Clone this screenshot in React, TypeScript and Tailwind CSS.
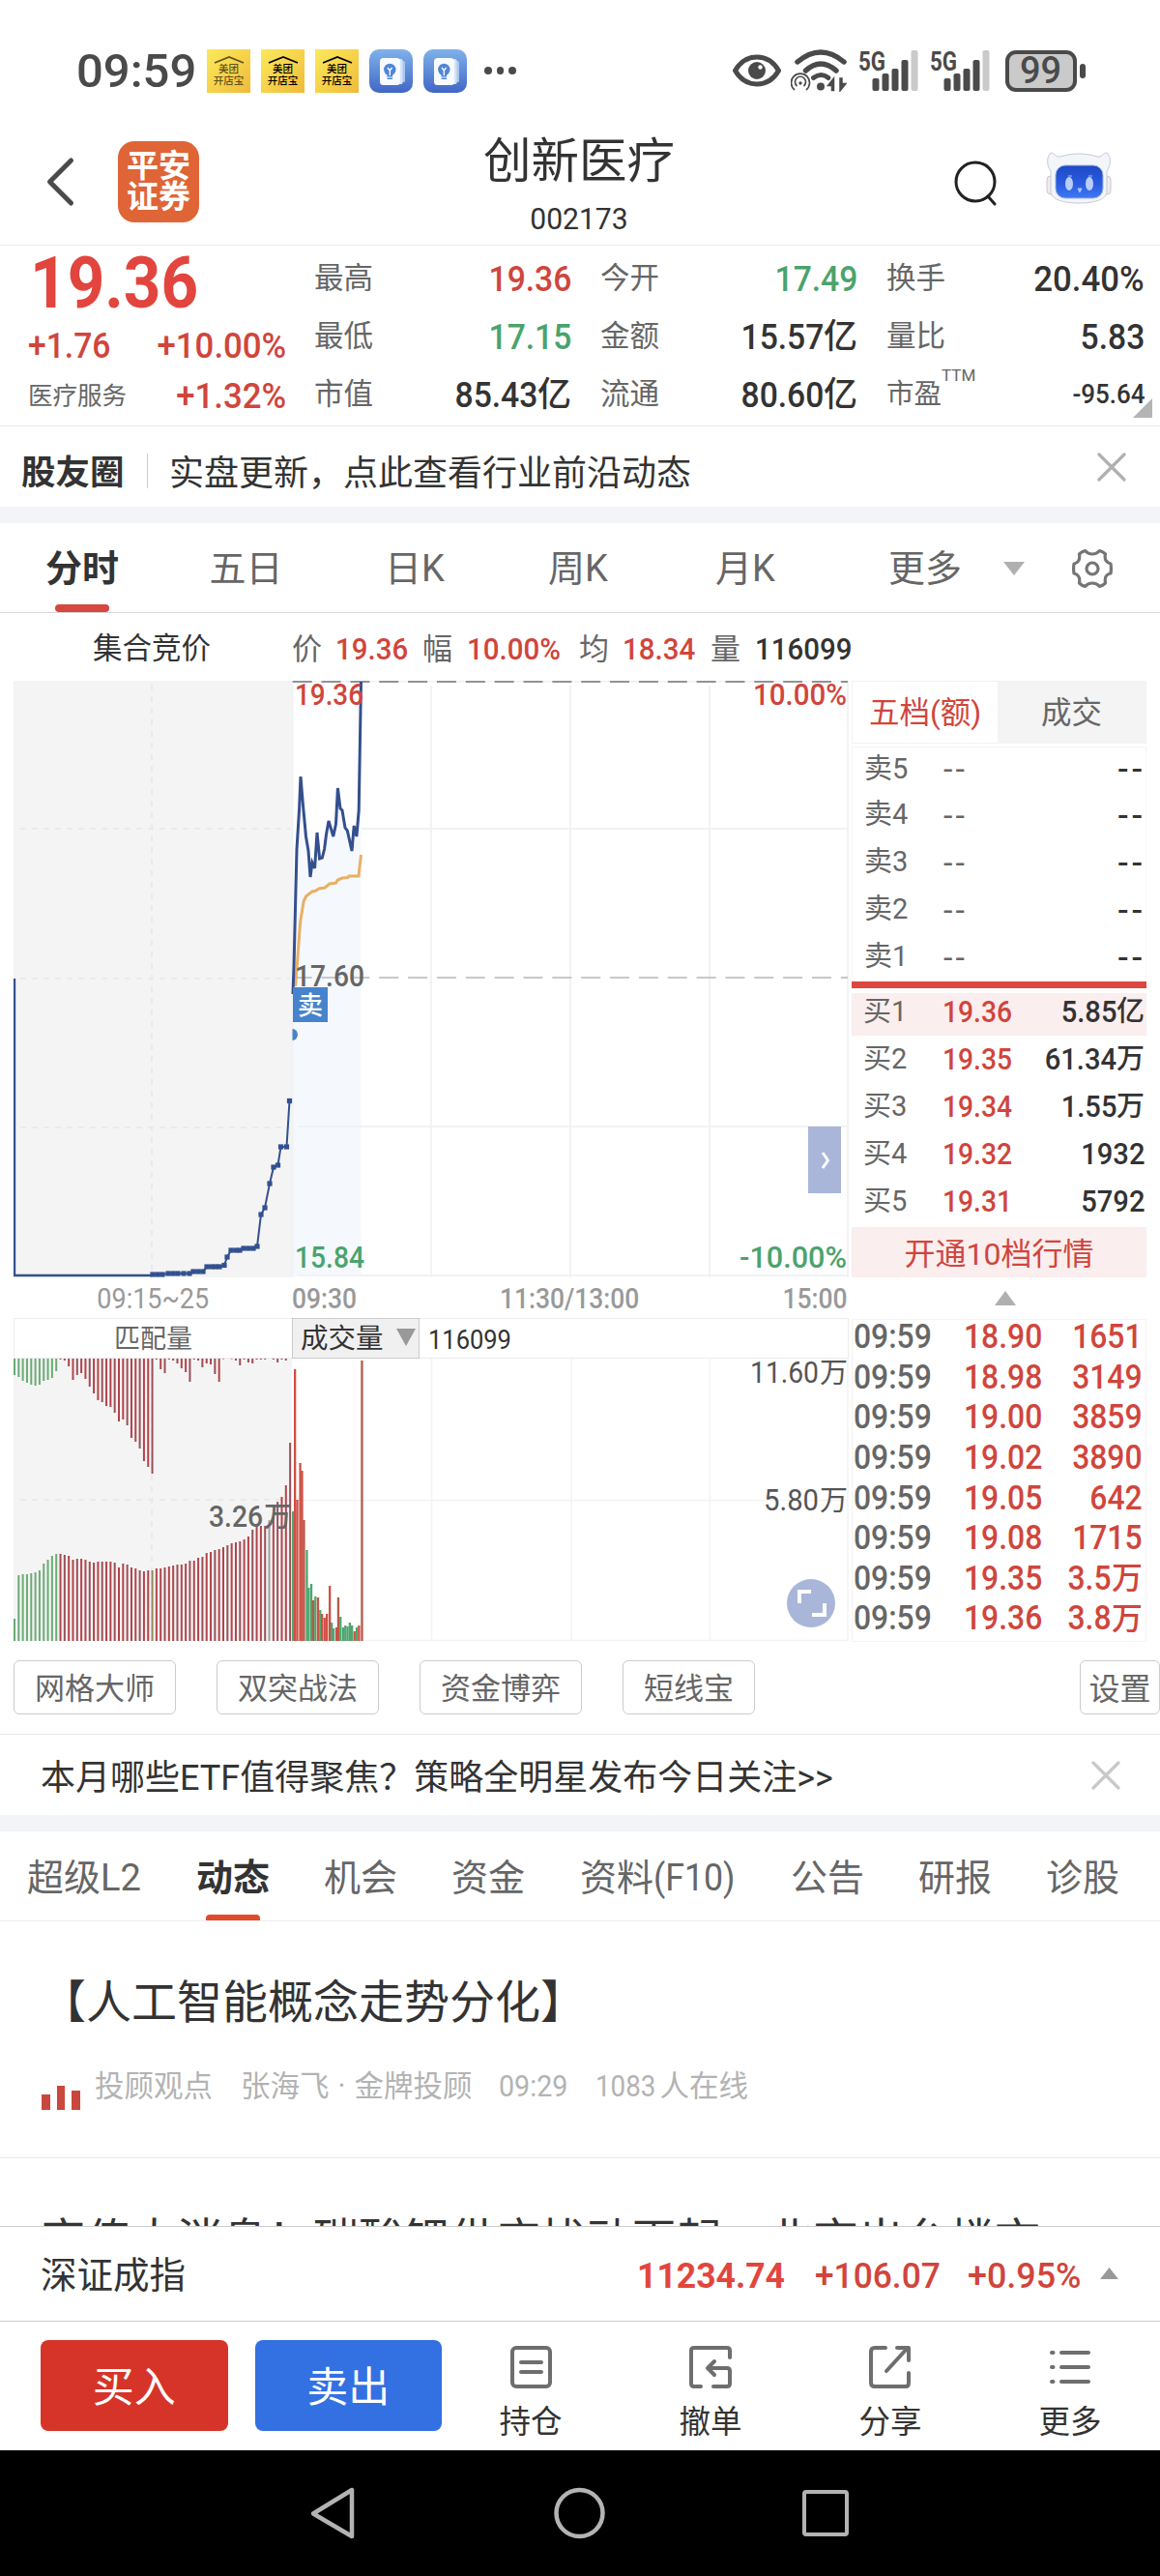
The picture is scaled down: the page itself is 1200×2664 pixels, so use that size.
import type { ReactNode } from "react";

const RED = "text-[#d0453c]";
const GREEN = "text-[#4aa36c]";

/* Condensed figures, anchored to the side they are aligned on. */
function Num({ children, className = "", right = false, wide = false }: { children: ReactNode; className?: string; right?: boolean; wide?: boolean }) {
  return (
    <span
      className={`inline-block whitespace-nowrap ${wide ? "scale-x-[0.94]" : "scale-x-[0.91]"} ${right ? "origin-right" : "origin-left"} ${className}`}
    >
      {children}
    </span>
  );
}

function MeituanIcon({ faded = false }: { faded?: boolean }) {
  return (
    <div
      className={`flex h-[45px] w-[45px] flex-col items-center bg-linear-to-br from-[#fae95c] via-[#f6d34a] to-[#f0b93c] pt-[7px] text-[10.5px] leading-[12px] font-medium ${faded ? "text-[#5f5320]" : "text-black"}`}
    >
      <svg width="32" height="8" viewBox="0 0 32 8" fill="none" stroke="currentColor" strokeWidth="1.8">
        <path d="M1 7 16 1l15 6" />
      </svg>
      <span>美团</span>
      <span>开店宝</span>
    </div>
  );
}

function IdeaIcon() {
  return (
    <svg width="45" height="45" viewBox="0 0 45 45">
      <defs>
        <linearGradient id="idea" x1="0" y1="0" x2="0" y2="1">
          <stop offset="0" stopColor="#7fb2ea" />
          <stop offset="1" stopColor="#4166c6" />
        </linearGradient>
      </defs>
      <rect width="45" height="45" rx="10" fill="url(#idea)" />
      <rect x="33" y="12" width="4" height="22" rx="1.5" fill="#a9c6f0" />
      <rect x="30" y="10" width="4.500" height="26" rx="1.5" fill="#d5e3f8" />
      <rect x="11" y="9" width="21" height="28" rx="3.5" fill="#f7faff" />
      <circle cx="21.300" cy="21" r="6.200" fill="#4f86d8" />
      <path d="M18.500 25h5.600v3.500h-5.600zM18.500 29.500h5.600v1.500h-5.600z" fill="#4f86d8" />
      <path d="m19 19 2.300 3 2.300-3M21.300 22v5" stroke="#fff" strokeWidth="1.3" fill="none" />
    </svg>
  );
}

function Signal() {
  return (
    <svg width="62" height="44" viewBox="0 0 62 44">
      <text x="0" y="22" fontSize="28" fontWeight="700" fill="#4a4a4a" textLength="28" lengthAdjust="spacingAndGlyphs" fontFamily="Roboto, sans-serif">
        5G
      </text>
      <rect x="14.500" y="30" width="7" height="13" rx="2" fill="#4a4a4a" />
      <rect x="24.500" y="25" width="7" height="18" rx="2" fill="#4a4a4a" />
      <rect x="34.500" y="20" width="7" height="23" rx="2" fill="#4a4a4a" />
      <rect x="44.500" y="11" width="7" height="32" rx="2" fill="#4a4a4a" />
      <rect x="54.500" y="1" width="7" height="42" rx="2" fill="#cacaca" />
    </svg>
  );
}

function StatusBar() {
  return (
    <div className="flex h-[138px] items-center pt-[8px] text-[#4a4a4a]">
      <div className="ml-[79px] w-[135px] text-[49px] leading-none font-medium">09:59</div>
      <div className="flex gap-[11px]">
        <MeituanIcon faded />
        <MeituanIcon />
        <MeituanIcon />
        <IdeaIcon />
        <IdeaIcon />
      </div>
      <div className="ml-[18px] flex gap-[5px]">
        <i className="h-[7.500px] w-[7.500px] rounded-full bg-[#4a4a4a]" />
        <i className="h-[7.500px] w-[7.500px] rounded-full bg-[#4a4a4a]" />
        <i className="h-[7.500px] w-[7.500px] rounded-full bg-[#4a4a4a]" />
      </div>
      <svg className="ml-[224px]" width="50" height="34" viewBox="0 0 50 34">
        <path d="M2.500 17C8 7.500 16 3 25 3s17 4.500 22.500 14C42 26.500 34 31 25 31S8 26.500 2.500 17Z" fill="none" stroke="#4a4a4a" strokeWidth="5" strokeLinejoin="round" />
        <circle cx="25" cy="17" r="9" fill="#4a4a4a" />
        <circle cx="28.500" cy="13.500" r="2.200" fill="#fff" />
      </svg>
      <svg className="ml-[10px]" width="58" height="44" viewBox="0 0 58 44" fill="none" stroke="#4a4a4a">
        <path d="M7 13Q31-7 55 13" strokeWidth="5.500" strokeLinecap="round" />
        <path d="M15.500 22Q31 8 47 22" strokeWidth="5.500" strokeLinecap="round" />
        <path d="M23.500 29.500q8-6 15.500 0" strokeWidth="5" strokeLinecap="round" />
        <circle cx="31" cy="38.500" r="4" fill="#4a4a4a" stroke="none" />
        <path d="M38.500 37.500 44.500 30v12.500h-2v-5zM57 35.500 51 43V30h2v5.500z" fill="#4a4a4a" strokeWidth="1.500" />
        <path d="M4 42A9.500 9.500 0 1 1 16 42M6.500 38a5.500 5.500 0 1 1 7 0" strokeWidth="1.700" />
        <circle cx="10" cy="35" r="1.700" fill="#4a4a4a" stroke="none" />
      </svg>
      <div className="ml-[12px] flex gap-[12px]">
        <Signal />
        <Signal />
      </div>
      <div className="ml-[16px] flex h-[43px] w-[74px] items-center justify-center rounded-[11px] border-[4px] border-[#4a4a4a] bg-[#cacaca] text-[38px] leading-none font-medium">
        99
      </div>
      <div className="ml-[3px] h-[15px] w-[6px] rounded-[3px] bg-[#4a4a4a]" />
    </div>
  );
}

function Robot() {
  return (
    <svg width="70" height="54" viewBox="0 0 70 54">
      <defs>
        <linearGradient id="visor" x1="0" y1="0" x2="0" y2="1">
          <stop offset="0" stopColor="#1f49c4" />
          <stop offset=".55" stopColor="#2a5be0" />
          <stop offset="1" stopColor="#3f78f2" />
        </linearGradient>
      </defs>
      <rect x="2" y="25" width="10" height="19" rx="4" fill="#f3eaea" stroke="#c8c8d2" />
      <rect x="58" y="25" width="10" height="19" rx="4" fill="#f3eaea" stroke="#c8c8d2" />
      <path
        d="M6 1c4 0 5 5 10 4 12-4 26-4 38 0 5 1 6-4 10-4 5 6 4 13 0 19v21c0 8-12 12-29 12S6 49 6 41V20C2 14 1 7 6 1Z"
        fill="#f3f5f9"
        stroke="#c5cad6"
      />
      <rect x="11" y="14" width="49" height="34" rx="10" fill="url(#visor)" stroke="#9fb4e8" />
      <ellipse cx="25" cy="33" rx="4" ry="7" fill="#b9cffa" />
      <ellipse cx="46" cy="33" rx="4" ry="7" fill="#b9cffa" />
      <path d="M34 38h4l-2 4zM24 25h4M45 25h4" stroke="#a9c2f7" fill="#a9c2f7" />
    </svg>
  );
}

function Header() {
  return (
    <div className="flex h-[116px] items-start border-b border-[#ececec]">
      <div className="flex h-[99px] w-[400px] items-center pl-[47px]">
        <svg width="32" height="52" viewBox="0 0 32 52" fill="none" stroke="#4a4a4a" strokeWidth="5" strokeLinecap="round" strokeLinejoin="round">
          <path d="M26.500 4 4.500 26l22 22" />
        </svg>
        <div className="ml-[43px] flex h-[84px] w-[84px] flex-col items-center justify-center rounded-[17px] bg-[#df6537] pt-[1px] text-[33px] leading-[32px] font-bold text-white">
          <span>平安</span>
          <span>证券</span>
        </div>
      </div>
      <div className="flex w-[400px] flex-col items-center pr-[2px] text-[#333]">
        <div className="text-[49.500px] leading-[58px]">创新医疗</div>
        <div className="-mt-px scale-x-[0.94] text-[32px] leading-[62px]">002173</div>
      </div>
      <div className="flex h-[99px] w-[400px] items-center">
        <svg className="ml-[186px]" width="48" height="50" viewBox="0 0 48 50" fill="none" stroke="#222" strokeWidth="3" strokeLinecap="round">
          <circle cx="23" cy="25" r="20" />
          <path d="m36 40 7 8" />
        </svg>
        <div className="ml-[47px] -mt-[8px]">
          <Robot />
        </div>
      </div>
    </div>
  );
}

function Stat({ label, value, unit, color = "text-[#333]", wide = false }: { label: string; value: string; unit?: string; color?: string; wide?: boolean }) {
  return (
    <div className="flex h-[60px] items-center justify-between">
      <span className="pt-px text-[30.500px] text-[#666]">{label}</span>
      <span className={`flex items-center font-medium ${color}`}>
        <Num right wide={wide} className="text-[37px]">{value}</Num>
        {unit && <span className="text-[35px]">{unit}</span>}
      </span>
    </div>
  );
}

function Quote() {
  return (
    <div className="relative flex h-[187px] border-b border-[#e6e6e6] leading-none">
      <div className="w-[325px] pl-[29px]">
        <div className="flex h-[77px] items-center pl-[2px] text-[#e2453d]">
          <Num className="text-[74px] font-bold">19.36</Num>
        </div>
        <div className={`flex h-[53px] w-[267px] items-center justify-between text-[37px] font-medium ${RED}`}>
          <Num>+1.76</Num>
          <Num right wide>+10.00%</Num>
        </div>
        <div className={`flex h-[50px] w-[267px] items-center justify-between ${RED}`}>
          <span className="pt-px text-[25.500px] text-[#666]">医疗服务</span>
          <Num right wide className="text-[37px] font-medium">+1.32%</Num>
        </div>
      </div>
      <div className="flex gap-[30px] pt-[4px]">
        <div className="w-[266px]">
          <Stat label="最高" value="19.36" color={RED} />
          <Stat label="最低" value="17.15" color={GREEN} />
          <Stat label="市值" value="85.43" unit="亿" />
        </div>
        <div className="w-[266px]">
          <Stat label="今开" value="17.49" color={GREEN} />
          <Stat label="金额" value="15.57" unit="亿" />
          <Stat label="流通" value="80.60" unit="亿" />
        </div>
        <div className="w-[267px]">
          <Stat label="换手" value="20.40%" wide />
          <Stat label="量比" value="5.83" />
          <div className="flex h-[60px] items-center justify-between">
            <span className="flex items-center pt-px text-[28.500px] text-[#666]">
              市盈<sup className="-mt-[24px] text-[17px] leading-none">TTM</sup>
            </span>
            <Num right className="text-[28.500px] font-medium text-[#333]">-95.64</Num>
          </div>
        </div>
      </div>
      <svg className="absolute right-[8px] bottom-[8px]" width="20" height="20" viewBox="0 0 20 20">
        <path d="M20 0v20H0z" fill="#b4b4b4" />
      </svg>
    </div>
  );
}

function Cross({ color }: { color: string }) {
  return (
    <svg width="30" height="30" viewBox="0 0 30 30" stroke={color} strokeWidth="3.200" strokeLinecap="round">
      <path d="m2 2 26 26M28 2 2 28" />
    </svg>
  );
}

function Notice() {
  return (
    <div className="flex h-[83px] items-center leading-none text-[#333]">
      <div className="mt-[14px] ml-[22px] w-[130px] text-[35.500px] font-bold">股友圈</div>
      <div className="mt-[9px] h-[36px] w-px bg-[#ccc]" />
      <div className="mt-[14px] ml-[22px] flex-1 text-[36px]">实盘更新，点此查看行业前沿动态</div>
      <div className="mr-[35px]">
        <Cross color="#b0b0b0" />
      </div>
    </div>
  );
}

function PeriodTabs() {
  const tab = "flex items-center justify-center";
  return (
    <div className="flex h-[93px] border-b border-[#d8d8d8] pt-[2px] text-[38px] leading-none text-[#666]">
      <div className={`${tab} relative w-[170px] font-bold text-[#333]`}>
        分时
        <span className="absolute bottom-0 left-[57px] h-[8px] w-[56px] rounded-[4px] bg-[#d4483f]" />
      </div>
      <div className={`${tab} w-[169px]`}>五日</div>
      <div className={`${tab} w-[180px]`}>日K</div>
      <div className={`${tab} w-[158px]`}>周K</div>
      <div className={`${tab} w-[188px]`}>月K</div>
      <div className={`${tab} ml-[11px] w-[162px]`}>更多</div>
      <div className={`${tab} w-[22px]`}>
        <svg width="22" height="14" viewBox="0 0 22 14"><path d="M0 0h22L11 14z" fill="#b0b0b0" /></svg>
      </div>
      <div className={`${tab} ml-[49px] w-[42px]`}>
        <svg width="42" height="42" viewBox="0 0 42 42" fill="none" stroke="#757575" strokeWidth="3.200" strokeLinejoin="round">
          <path d="M13.500 2.500Q16.500 6 21 6t7.500-3.500Q32 3.500 34.500 6q-1 4.500 .8 7t4.700 3q.8 5 0 10-3.500 .7-4.900 3t-.6 7q-2.500 2.500-6 3.500Q25.500 36 21 36t-7.500 3.500Q10 38.500 7.500 36q.8-4.500-.8-7T2 26q-.8-5 0-10 3.200-.5 4.700-3t.8-7Q10 3.500 13.500 2.500Z" />
          <circle cx="21" cy="21" r="6" />
        </svg>
      </div>
    </div>
  );
}

function ChartHeader() {
  const val = "inline-block origin-left scale-x-[0.95] font-medium";
  return (
    <div className="flex h-[70px] items-center pt-[5px] text-[31px] leading-none text-[#666]">
      <span className="w-[302px] pl-[96px] text-[30.500px] text-[#333]">集合竞价</span>
      <span className="w-[45px]">价</span>
      <span className="w-[90px]"><span className={`${val} ${RED}`}>19.36</span></span>
      <span className="w-[46px]">幅</span>
      <span className="w-[116px]"><span className={`${val} ${RED}`}>10.00%</span></span>
      <span className="w-[45px]">均</span>
      <span className="w-[91px]"><span className={`${val} ${RED}`}>18.34</span></span>
      <span className="w-[46px]">量</span>
      <span className={`${val} text-[#333]`}>116099</span>
    </div>
  );
}

const PRICE =
  "303,1028 304,1000 307,878 309.5,838 311,803 313.5,833 316.5,865 319,880 321,907 323,892 325.600,898 328,861 330.600,888 333.300,887 335.600,878 337.500,863 340,849 344.800,865 347.500,852 349.400,815 352,836 354,838 357,856 359.300,859 364,880 366.200,854 368.900,865 371.200,838 373.500,705";
const AVERAGE =
  "305.700,1020 308.400,983 310.700,953 314.200,932 316.500,927 319,925 323,922 326,921.500 330,919 336,918 341,914 347.500,913 349.400,910 354,908 359.700,907.500 361,906 371,906 373.500,884";
const AUCTION: [number, number][] = [
  [158, 1318], [163, 1318], [168, 1318], [174, 1317], [179, 1317], [184, 1317], [190, 1317], [196, 1317],
  [200, 1315], [205, 1315], [210, 1315], [214, 1310], [219, 1310], [223, 1310], [227, 1310], [232, 1308.500],
  [235, 1300], [239, 1293], [244, 1293], [248, 1293], [252, 1291], [257, 1291], [262, 1291], [266, 1289],
  [270, 1256], [274, 1249], [279, 1224], [283, 1207], [287.500, 1205], [290.500, 1186], [296.500, 1186], [299.500, 1138.500],
];

function Label({ x, y, w, fill, children, weight = 500, size = 32 }: { x: number; y: number; w: number; fill: string; children: string; weight?: number; size?: number }) {
  return (
    <text x={x} y={y} fontSize={size} fontWeight={weight} fill={fill} textLength={w} lengthAdjust="spacingAndGlyphs">
      {children}
    </text>
  );
}

function PriceChart() {
  return (
    <svg width="864" height="617" viewBox="14 704 864 617" className="block">
      <rect x="14" y="704" width="288" height="617" fill="#f4f4f4" />
      <g stroke="#eaeaea" strokeWidth="2" strokeDasharray="6 6" fill="none">
        <path d="M157 708V1318M21 857H300M21 1012H300M21 1166H300" />
      </g>
      <polygon points={`${PRICE} 373.500,1320 303,1320`} fill="#f5f8fd" />
      <g stroke="#f1f2f3" strokeWidth="2" fill="none">
        <path d="M302.500 704V1321M446 709V1321M590 709V1321M734 709V1321M877 704V1321M302 704.500H878M374 857H877M308 1165H877M308 1319H877" />
      </g>
      <path d="M302.700 705H877" stroke="#929292" strokeWidth="2" strokeDasharray="20 9.850" />
      <path d="M302.700 1011H877" stroke="#c8c8c8" strokeWidth="2" strokeDasharray="20 9.850" />
      <path d="M15 1012V1319H157" stroke="#33508f" strokeWidth="2.400" fill="none" />
      <polyline points={AUCTION.map((p) => p.join(",")).join(" ")} fill="none" stroke="#33508f" strokeWidth="2" />
      {AUCTION.map(([x, y]) => (
        <rect key={x} x={x - 2.600} y={y - 2.600} width="5.200" height="5.200" fill="#33508f" />
      ))}
      <polyline points={AVERAGE} fill="none" stroke="#e8b065" strokeWidth="3" />
      <polyline points={PRICE} fill="none" stroke="#344f8e" strokeWidth="3" />
      <Label x={305} y={728.500} w={71} fill="#d0453c">19.36</Label>
      <Label x={779} y={728.500} w={97} fill="#d0453c">10.00%</Label>
      <Label x={305} y={1020} w={72} fill="#666">17.60</Label>
      <Label x={305} y={1311} w={72} fill="#4aa36c">15.84</Label>
      <Label x={765} y={1311} w={111} fill="#4aa36c">-10.00%</Label>
      <rect x="303" y="1021" width="36" height="36" fill="#4783cc" />
      <text x="321" y="1049" fontSize="26" fontWeight="500" textAnchor="middle" fill="#fff">卖</text>
      <path d="M302.500 1064a5.500 6 0 0 1 0 12z" fill="#4783cc" />
      <rect x="836" y="1165" width="34" height="69" fill="#a9b6da" />
      <path d="m851 1192 5.500 8-5.500 8" stroke="#fff" strokeWidth="3" fill="none" />
    </svg>
  );
}

/* Auction volume: heights of the bars hanging from the top edge and standing on the bottom edge. */
const HANGING = [
  17, 19, 23, 25, 27, 28, 27, 23, 22, 20, 13, 1, 2, 8, 22, 17, 15, 21, 29, 36, 43, 45, 49, 50, 56, 65, 63, 69, 82, 86, 93, 106, 112, 119, 1, 11, 15, 1, 2, 5, 10, 14, 24, 1,
  2, 9, 5, 6, 16, 24, 0.500, 0, 0.500, 2, 7, 1, 4, 5, 1, 1, 1, 0, 1, 4, 1, 2, 0,
];
const STANDING = [
  23, 68, 69, 69, 70, 71, 73, 80, 84, 88, 90, 90, 89, 88, 84, 85, 85, 84, 82, 81, 82, 82, 82, 82, 81, 76, 80, 79, 76, 75, 73, 72, 73, 73, 75, 75, 76, 77, 78, 79, 79, 80, 83,
  83, 86, 87, 91, 92, 94, 95, 97, 99, 101, 102, 103, 105, 108, 115, 118, 119, 119, 125, 128, 144, 149, 161, 205,
];
/* Session volume: colour, x, height. */
const SESSION: [string, number, number][] = [
  ["g", 302, 134], ["r", 304, 281], ["r", 306.300, 146], ["r", 309.400, 184], ["r", 311.300, 176], ["b", 313.300, 125], ["g", 316.300, 94], ["g", 318.200, 55],
  ["g", 320.900, 59], ["b", 322.800, 42], ["g", 325.100, 46], ["r", 327.800, 45], ["g", 330.100, 32], ["r", 332, 28], ["r", 334.600, 24], ["r", 337, 28],
  ["r", 340, 57], ["g", 342, 19], ["g", 343.900, 13], ["r", 346.900, 14], ["b", 348.800, 45], ["g", 351.100, 25], ["g", 353.800, 14], ["g", 356.100, 16],
  ["g", 358.400, 15], ["g", 360.700, 19], ["g", 363, 16], ["r", 365.600, 10], ["g", 367.900, 14], ["r", 370.200, 16], ["b", 373.300, 290],
];
const VOLUME_COLOR: Record<string, string> = { g: "#4fa66f", r: "#cf4f44", b: "#b55a48" };

function VolumeChart() {
  return (
    <svg width="864" height="293" viewBox="14 1405 864 293" className="block">
      <rect x="14" y="1405" width="288" height="292" fill="#f4f4f4" />
      <g stroke="#eaeaea" strokeWidth="2" strokeDasharray="6 6" fill="none">
        <path d="M157 1405V1697M21 1551H302" />
      </g>
      <path d="M446.500 1405V1697M591 1405V1697M734.500 1405V1697M877 1405V1697M302 1551.500H877M302 1696.500H877" stroke="#f3f3f3" strokeWidth="1.500" fill="none" />
      {HANGING.map((h, i) => (
        <rect key={i} x={14 + i * 4.320} y="1405" width="2" height={h} fill={i < 11 ? "#6bab75" : i % 3 ? "#b2444a" : "#99505a"} />
      ))}
      {STANDING.map((h, i) => (
        <rect key={i} x={14 + i * 4.320} y={1697 - h} width="2" height={h} fill={i < 11 ? "#6bab75" : i === 33 ? "#8f8a5c" : i === 61 ? "#a0a0a0" : i % 3 ? "#b2444a" : "#99505a"} />
      ))}
      {SESSION.map(([c, x, h]) => (
        <rect key={x} x={x} y={1697 - h} width="2.300" height={h} fill={VOLUME_COLOR[c]} />
      ))}
      <Label x={216} y={1579} w={56} fill="#666" size={31}>3.26</Label>
      <text x="273" y="1579" fontSize="29" fontWeight="500" fill="#666">万</text>
      <Label x={776} y={1430} w={71} fill="#555" size={31} weight={400}>11.60</Label>
      <text x="848" y="1430" fontSize="29" fill="#555">万</text>
      <Label x={790} y={1562} w={57} fill="#555" size={31} weight={400}>5.80</Label>
      <text x="848" y="1562" fontSize="29" fill="#555">万</text>
      <circle cx="839" cy="1658" r="25" fill="#a9b6da" />
      <path d="M827 1658v-12h12M853 1658v12h-13" stroke="#fff" strokeWidth="4" fill="none" />
    </svg>
  );
}

function Charts() {
  return (
    <div className="w-[864px]">
      <PriceChart />
      <div className="flex h-[42px] items-center pt-[2px] text-[29px] leading-none text-[#999]">
        <div className="w-[288px] text-center"><span className="inline-block scale-x-[0.93]">09:15~25</span></div>
        <div className="flex w-[575px] justify-between font-medium">
          <Num>09:30</Num>
          <Num className="relative left-[7px]">11:30/13:00</Num>
          <Num right>15:00</Num>
        </div>
      </div>
      <div className="flex h-[42px] border border-[#ececec] text-[28px] leading-none">
        <div className="flex w-[287px] items-center justify-center pt-[2px] text-[27px] text-[#666]">匹配量</div>
        <div className="-my-px flex w-[132px] items-center border border-[#ccc] bg-[#f0f0f0] pt-[2px] pl-[8px] text-[28.500px] text-[#333]">
          成交量
          <svg className="-mt-[4px] ml-[13px]" width="20" height="18" viewBox="0 0 20 18"><path d="M0 0h20L10 18z" fill="#999" /></svg>
        </div>
        <div className="flex items-center pt-[4px] pl-[9px] text-[#333]"><Num>116099</Num></div>
      </div>
      <VolumeChart />
    </div>
  );
}

function BookRow({ label, price, amount, unit, className = "h-[49px]" }: { label: string; price?: string; amount?: string; unit?: string; className?: string }) {
  return (
    <div className={`flex items-center pr-[2px] pl-[12px] leading-none ${className}`}>
      <span className="w-[82px] text-[29px] text-[#666]">{label}</span>
      {price ? (
        <>
          <Num className={`text-[31px] font-medium ${RED}`}>{price}</Num>
          <span className="flex flex-1 items-center justify-end text-[31px] font-medium text-[#333]">
            <Num right wide>{amount}</Num>
            {unit && <span className="text-[29px]">{unit}</span>}
          </span>
        </>
      ) : (
        <>
          <span className="text-[34px] tracking-[3px] text-[#666]">--</span>
          <span className="-mr-[2px] flex-1 text-right text-[34px] tracking-[3px] font-medium text-[#333]">--</span>
        </>
      )}
    </div>
  );
}

const TRADES = [
  ["18.90", "1651"],
  ["18.98", "3149"],
  ["19.00", "3859"],
  ["19.02", "3890"],
  ["19.05", "642"],
  ["19.08", "1715"],
  ["19.35", "3.5", "万"],
  ["19.36", "3.8", "万"],
];

function OrderBook() {
  return (
    <div className="ml-[3px] w-[305px]">
      <div className="flex h-[65px] border border-[#f2f2f2] text-[31.500px] leading-none">
        <div className={`flex w-[150px] items-center justify-center pt-[3px] ${RED}`}>五档(额)</div>
        <div className="flex flex-1 items-center justify-center bg-[#f4f4f4] pt-[3px] text-[#666]">成交</div>
      </div>
      <div className="mt-[3px] border border-b-0 border-[#f5f5f5]">
        <BookRow label="卖5" className="h-[46px] pb-[2px]" />
        <BookRow label="卖4" className="h-[49px] pb-[2px]" />
        <BookRow label="卖3" className="h-[49px] pb-[2px]" />
        <BookRow label="卖2" className="h-[49px] pb-[2px]" />
        <BookRow label="卖1" className="h-[49px] pb-[2px]" />
      </div>
      <div className="h-[7px] bg-[#dc4840]" />
      <BookRow label="买1" price="19.36" amount="5.85" unit="亿" className="mt-[5px] h-[44px] bg-[#fbeeee] pb-[5px]" />
      <BookRow label="买2" price="19.35" amount="61.34" unit="万" />
      <BookRow label="买3" price="19.34" amount="1.55" unit="万" />
      <BookRow label="买4" price="19.32" amount="1932" />
      <BookRow label="买5" price="19.31" amount="5792" />
      <div className={`mt-[2px] flex h-[52px] items-center justify-center bg-[#fbeeee] pt-[3px] text-[32px] leading-none ${RED}`}>开通10档行情</div>
      <div className="flex h-[43px] items-center justify-center pl-[13px]">
        <svg width="22" height="15" viewBox="0 0 22 15"><path d="M11 0 22 15H0z" fill="#b0b0b0" /></svg>
      </div>
      <div className="h-[334px] border border-[#f3f3f3]">
        <div className="-mt-[3px] font-medium text-[35px] leading-none">
          {TRADES.map(([price, amount, unit]) => (
            <div key={price} className={`flex h-[41.600px] items-center pr-[3px] pl-[1px] ${RED}`}>
              <Num className="w-[114px] text-[#666]">09:59</Num>
              <Num>{price}</Num>
              <span className="flex flex-1 items-center justify-end">
                <Num right>{amount}</Num>
                {unit && <span className="text-[32px]">{unit}</span>}
              </span>
            </div>
          ))}
        </div>
      </div>
    </div>
  );
}

function ToolButtons() {
  const box = "flex h-[56px] items-center justify-center rounded-[6px] border border-[#ccc] pt-[3px]";
  return (
    <div className="flex h-[96px] items-center border-b border-[#e9e9e9] pb-[1px] text-[31px] leading-none text-[#666]">
      <div className={`${box} ml-[14px] w-[168px]`}>网格大师</div>
      <div className={`${box} ml-[42px] w-[168px]`}>双突战法</div>
      <div className={`${box} ml-[42px] w-[168px]`}>资金博弈</div>
      <div className={`${box} ml-[42px] w-[137px]`}>短线宝</div>
      <div className={`${box} ml-auto w-[83px] text-[32px]`}>设置</div>
    </div>
  );
}

function Promo() {
  return (
    <div className="flex h-[83px] items-center justify-between leading-none">
      <div className="pt-[7px] pl-[42px] text-[36px] text-[#333]">
        本月哪些ETF值得聚焦？策略全明星发布今日关注&gt;&gt;
      </div>
      <div className="mr-[41px]">
        <Cross color="#c9c9c9" />
      </div>
    </div>
  );
}

function InfoTabs() {
  return (
    <div className="flex h-[93px] items-center border-b border-[#eee] pt-[3px] pl-[28px] text-[38px] leading-none text-[#666]">
      <div className="w-[175px] whitespace-nowrap">超级L2</div>
      <div className="relative flex h-full w-[132px] items-center font-bold text-[#333]">
        动态
        <span className="absolute bottom-0 left-[10px] h-[6px] w-[56px] rounded-t-[4px] bg-[#e04b2b]" />
      </div>
      <div className="w-[132px]">机会</div>
      <div className="w-[133px]">资金</div>
      <div className="w-[218px] whitespace-nowrap">资料<Num wide>(F10)</Num></div>
      <div className="w-[132px]">公告</div>
      <div className="w-[132px]">研报</div>
      <div>诊股</div>
    </div>
  );
}

function Articles() {
  return (
    <>
      <div className="h-[245px] border-b border-[#ebebeb] pt-[58px] pl-[42px] leading-none">
        <div className="text-[47px] leading-[52px] text-[#333]">【人工智能概念走势分化】</div>
        <div className="mt-[42px] flex h-[44px] items-end text-[30.500px] text-[#b3b3b3]">
          <svg className="mb-[1px]" width="42" height="25" viewBox="0 0 42 25" fill="#c9473d">
            <path d="M1 9h9v16H1zM17 0h8v25h-8zM32 5h9v20h-9z" />
          </svg>
          <div className="flex pb-[3px] leading-[44px]">
            <span className="ml-[14px] w-[151px]">投顾观点</span>
            <span className="w-[267px] whitespace-nowrap">张海飞<span className="inline-block w-[26px] text-center">·</span>金牌投顾</span>
            <span className="w-[100px]"><Num wide>09:29</Num></span>
            <Num>1083</Num>
            <span className="-ml-[2px]">人在线</span>
          </div>
        </div>
      </div>
      <div className="h-[70px] overflow-hidden pt-[60px] pl-[42px] text-[47px] leading-[50px] whitespace-nowrap text-[#333]">
        突传大消息！碳酸锂供应扰动再起，北京出台楼市
      </div>
    </>
  );
}

function IndexBar() {
  return (
    <div className={`flex h-[98px] items-center border-t border-[#ccc] pt-[4px] pl-[42px] text-[37px] leading-none font-medium ${RED}`}>
      <span className="w-[617px] pt-px text-[37.500px] font-normal text-[#333]">深证成指</span>
      <span className="w-[184px] text-[#e2453d]"><span className="inline-block origin-left scale-x-[0.96] font-bold">11234.74</span></span>
      <span className="w-[158px]"><span className="inline-block origin-left scale-x-[0.955]">+106.07</span></span>
      <span className="w-[137px]"><span className="inline-block origin-left scale-x-[0.97]">+0.95%</span></span>
      <svg className="-mt-[5px]" width="19" height="12" viewBox="0 0 19 12"><path d="M9.500 0 19 12H0z" fill="#999" /></svg>
    </div>
  );
}

function Action({ label, children }: { label: string; children: ReactNode }) {
  return (
    <div className="flex w-[186px] flex-col items-center pt-[23px] text-[32.500px] leading-none text-[#333]">
      <svg width="46" height="48" viewBox="0 0 46 48" fill="none" stroke="#6e6e6e" strokeWidth="4" strokeLinecap="round" strokeLinejoin="round">
        {children}
      </svg>
      <span className="mt-[17px]">{label}</span>
    </div>
  );
}

function ActionBar() {
  const button = "mt-[19px] flex h-[94px] w-[194px] items-center justify-center rounded-[8px] pt-[4px] text-[43px] leading-none text-white";
  return (
    <div className="flex h-[134px] items-start border-t border-[#ccc]">
      <div className={`${button} ml-[42px] bg-[#d63429]`}>买入</div>
      <div className={`${button} ml-[28px] bg-[#3370e2]`}>卖出</div>
      <div className="-ml-px flex">
        <Action label="持仓">
          <rect x="4" y="4" width="39" height="40" rx="4" />
          <path d="M13 19h21M13 29h21" />
        </Action>
        <Action label="撤单">
          <path d="M13 44H6q-3 0-3-3V7q0-3 3-3h34q3 0 3 3v7M20 25h20q3 0 3 3v13q0 3-3 3H26M27 18l-7 7 7 7" />
        </Action>
        <Action label="分享">
          <path d="M18 4H7Q3 4 3 8v32q0 4 4 4h32q3 0 3-4V30M19 28 41 4M30 4h12v13" />
        </Action>
        <Action label="更多">
          <path d="M14 9h28M14 24h28M14 39h28M4 9h1.500M4 24h1.500M4 39h1.500" />
        </Action>
      </div>
    </div>
  );
}

function NavBar() {
  return (
    <div className="flex h-[130px] items-center bg-black pb-[1px]">
      <svg className="ml-[320px]" width="48" height="56" viewBox="0 0 48 56" fill="none" stroke="#b3b3b3" strokeWidth="4.500" strokeLinejoin="round">
        <path d="M44 4v48L4 28.500z" />
      </svg>
      <svg className="ml-[205px]" width="53" height="54" viewBox="0 0 53 54" fill="none" stroke="#b3b3b3" strokeWidth="4.500">
        <circle cx="26.500" cy="27" r="24" />
      </svg>
      <div className="ml-[204px] h-[48px] w-[48px] rounded-[4px] border-[4.500px] border-[#b3b3b3]" />
    </div>
  );
}

export default function App() {
  return (
    <div className="h-[2664px] w-[1200px] overflow-hidden bg-white font-[Roboto,'Noto_Sans_CJK_SC',sans-serif]">
      <StatusBar />
      <Header />
      <Quote />
      <Notice />
      <div className="h-[17px] bg-[#f2f4f8]" />
      <PeriodTabs />
      <ChartHeader />
      <div className="flex pl-[14px]">
        <Charts />
        <OrderBook />
      </div>
      <ToolButtons />
      <Promo />
      <div className="h-[17px] bg-[#f2f4f8]" />
      <InfoTabs />
      <Articles />
      <IndexBar />
      <ActionBar />
      <NavBar />
    </div>
  );
}
